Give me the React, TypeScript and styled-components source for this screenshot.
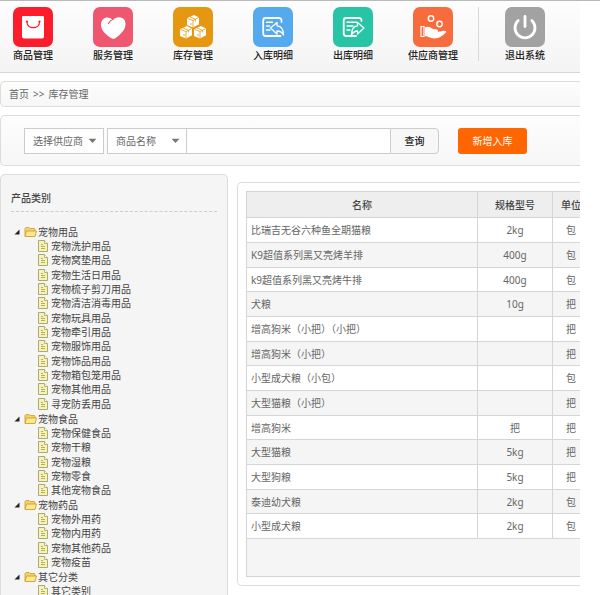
import React from "react";
import styled, { createGlobalStyle } from "styled-components";

const GlobalStyle = createGlobalStyle`
  * { box-sizing: border-box; }
  body {
    margin: 0;
    background: #fff;
    color: #666;
    font-family: "Noto Sans", "Noto Sans CJK SC", sans-serif;
    font-size: 10px;
    line-height: 14px;
  }
  button, input, select { font: inherit; color: inherit; margin: 0; }
  ul { list-style: none; margin: 0; padding: 0; }
`;

const Page = styled.div`
  height: 100vh;
  overflow: hidden;
  border-top: 1px solid #b9b9b9;
`;

const Shell = styled.div`
  display: flex;
  flex-direction: column;
  gap: 8px;
  margin-right: 20px;
`;

const Header = styled.header`
  display: flex;
  gap: 20px;
  height: 72px;
  padding: 6px 3px 0;
  border-bottom: 1px solid #d6d6d6;
  background: linear-gradient(#fdfdfd, #f4f4f4);
`;

const NavLink = styled.a`
  display: flex;
  flex-direction: column;
  align-items: center;
  gap: 1px;
  flex: 0 0 60px;
  height: 56px;
  color: #222;
  font-weight: 500;
  text-decoration: none;
  white-space: nowrap;
`;

const Tile = styled.span<{ $color: string }>`
  display: block;
  width: 40px;
  height: 40px;
  border-radius: 7px;
  background: ${(p) => p.$color};
  svg { display: block; }
`;

const Divider = styled.span`
  width: 1px;
  height: 54px;
  margin: 0 -4px 0 -5px;
  background: #d8d8d8;
`;

const Bar = styled.div`
  display: flex;
  align-items: center;
  border: 1px solid #dcdcdc;
  border-right: 0;
  border-radius: 5px 0 0 5px;
  background: linear-gradient(#fdfdfd, #f7f7f7);
`;

const Breadcrumb = styled(Bar).attrs({ as: "nav" })`
  gap: 4px;
  height: 26px;
  padding: 0 8px;
  a { color: inherit; text-decoration: none; }
`;

const SearchBar = styled(Bar).attrs({ as: "form" })`
  height: 51px;
  padding: 0 23px;
`;

const SelectBox = styled.span<{ $gap?: boolean }>`
  position: relative;
  flex: 0 0 80px;
  margin-right: ${(p) => (p.$gap ? "3px" : "0")};
  svg {
    position: absolute;
    right: 7px;
    top: 10px;
    pointer-events: none;
  }
`;

const Select = styled.select`
  display: block;
  appearance: none;
  width: 100%;
  height: 26px;
  padding: 0 18px 0 8px;
  border: 1px solid #ccc;
  border-radius: 0;
  background: #fff;
`;

const Keyword = styled.input`
  flex: 0 1 203px;
  min-width: 0;
  height: 26px;
  padding: 0 8px;
  border: 1px solid #ccc;
  border-width: 1px 0;
  background: #fff;
`;

const QueryButton = styled.button`
  flex: 0 0 49px;
  height: 26px;
  padding: 0;
  border: 1px solid #ccc;
  border-radius: 0 4px 4px 0;
  background: #f7f7f7;
  color: #222;
  font-weight: 500;
`;

const AddButton = styled.button`
  flex: 0 0 69px;
  height: 26px;
  margin-left: 19px;
  padding: 0;
  border: 0;
  border-radius: 3px;
  background: #ff6600;
  color: #fff;
`;

const Columns = styled.div`
  display: flex;
  align-items: flex-start;
  gap: 9px;
`;

const Sidebar = styled.aside`
  flex: 0 0 228px;
  padding: 16px 10px 20px;
  border: 1px solid #dcdcdc;
  border-radius: 5px;
  background: #f5f5f5;
`;

const SidebarTitle = styled.h2`
  margin: 0 0 12px;
  padding-bottom: 6px;
  border-bottom: 1px dashed #ccc;
  color: #444;
  font-size: 10px;
  font-weight: 500;
  line-height: 14px;
`;

const TreeRow = styled.div`
  display: flex;
  align-items: center;
  gap: 1px;
  height: 15px;
  padding-left: 3px;
  color: #444;
  line-height: 14px;
  white-space: nowrap;
  button { display: flex; padding: 0; border: 0; background: none; margin-right: 3px; }
  svg { flex: none; }
`;

const Leaf = styled.li`
  display: flex;
  align-items: center;
  gap: 3px;
  height: 14px;
  padding-left: 27px;
  color: #444;
  white-space: nowrap;
  &:nth-child(3n) { height: 15px; }
  svg { flex: none; }
`;

const Panel = styled.main`
  flex: 1;
  min-width: 0;
  overflow: hidden;
  margin-top: 8px;
  padding: 8px 0 8px 8px;
  border: 1px solid #dcdcdc;
  border-right: 0;
  border-radius: 5px 0 0 5px;
`;

const Table = styled.table`
  width: calc(100% + 10px);
  table-layout: fixed;
  border-collapse: collapse;
  line-height: 14px;
`;

const HeadCell = styled.th<{ $width?: number }>`
  width: ${(p) => (p.$width ? `${p.$width}px` : "auto")};
  height: 26px;
  padding: 0;
  border: 1px solid #d5d5d5;
  background: #eee;
  color: #444;
  font-weight: 500;
`;

const Row = styled.tr`
  height: 25px;
  background: #fff;
  &:nth-child(even) { background: #f5f5f5; }
  &:nth-child(3n) { height: 24px; }
`;

const Cell = styled.td<{ $left?: boolean }>`
  padding: 0 4px;
  border: 1px solid #d5d5d5;
  text-align: ${(p) => (p.$left ? "left" : "center")};
  white-space: nowrap;
`;

const FootCell = styled.td`
  height: 38px;
  border: 1px solid #d5d5d5;
  background: #f5f5f5;
`;

const BagIcon = () => (
  <svg width="40" height="40" viewBox="0 0 40 40" fill="none">
    <path d="M10 9h20a1 1 0 0 1 1 1v19.500a2 2 0 0 1-2 2H11a2 2 0 0 1-2-2V10a1 1 0 0 1 1-1z" fill="#fff" />
    <path d="M14 15c0 7.500 12.500 7.500 12.500 0" stroke="#fb1c2c" strokeWidth="1.300" />
    <circle cx="14" cy="14.500" r="1.100" fill="#fb1c2c" />
    <circle cx="26.500" cy="14.500" r="1.100" fill="#fb1c2c" />
  </svg>
);

const HeartIcon = () => (
  <svg width="40" height="40" viewBox="0 0 40 40" fill="none">
    <path d="M20 13c3-4 12.500-4 12.500 4 0 6-5 10.500-10.500 14.500-1 .6-2 .6-3 0C13 28 8 23.500 8 17.500 8 10.500 15.500 8 20 13z" fill="#fff" />
    <path d="M15.500 16.500c1-2 2.500-3.500 4.700-4.300" stroke="#ef566f" strokeWidth="1.200" strokeLinecap="round" />
  </svg>
);

const Box = ({ x, y }: { x: number; y: number }) => (
  <g transform={`translate(${x} ${y})`}>
    <path d="M0 3.200 7 0l5 2.400v6.800L6 12.500 0 10z" fill="#fff" />
    <path d="M.5 3.400 6 5.600l5.600-3M6 5.600v6.600M3 2l5.500 2.300v2.200M4 8v2" stroke="#e69710" strokeWidth=".8" />
  </g>
);

const BoxesIcon = () => (
  <svg width="40" height="40" viewBox="0 0 40 40" fill="none">
    <Box x={14} y={8} />
    <Box x={7} y={19} />
    <Box x={21} y={19} />
  </svg>
);

const InboundIcon = () => (
  <svg width="40" height="40" viewBox="0 0 40 40" fill="none" stroke="#fff" strokeLinejoin="round" strokeLinecap="round">
    <path d="M28.500 15v-1.500a2.500 2.500 0 0 0-2.500-2.500H12.700a2.500 2.500 0 0 0-2.500 2.500v13a2.500 2.500 0 0 0 2.500 2.500H27.500" strokeWidth="1.800" />
    <path d="M13.500 15.300h6M13.500 19h3M13.500 23h3.500" strokeWidth="1.400" />
    <path d="m17.500 21 6.500-5.500v3.300c4.500.3 6.500 3.700 6.500 9.200-1.500-3-3.500-4-6.500-4v3z" strokeWidth="1.300" />
  </svg>
);

const OutboundIcon = () => (
  <svg width="40" height="40" viewBox="0 0 40 40" fill="none" stroke="#fff" strokeLinejoin="round" strokeLinecap="round">
    <path d="M28.500 14v-.5a2.500 2.500 0 0 0-2.500-2.500H13.200a2.500 2.500 0 0 0-2.500 2.500v13a2.500 2.500 0 0 0 2.500 2.500H23" strokeWidth="1.800" />
    <path d="M14 15.300h9.500M14 19h6M14 23h3" strokeWidth="1.400" />
    <path d="m31 21-6.500-5.500v3.300c-4.300.3-6 3.700-6 9.200 1.500-3 3-4 6-4v3z" strokeWidth="1.300" />
  </svg>
);

const HandIcon = () => (
  <svg width="40" height="40" viewBox="0 0 40 40" fill="none">
    <circle cx="18" cy="11.500" r="2.700" stroke="#fff" strokeWidth="1.400" />
    <circle cx="26.500" cy="17" r="2.700" stroke="#fff" strokeWidth="1.400" />
    <path d="M8 19.500h3v10H8z" stroke="#fff" strokeWidth="1.200" />
    <path d="M12 20.500c3-1.500 5-.5 7.500 1.200 2 .8 5 .2 5.500 1.800 0 .6-.5 1-1.500 1.100 3 .3 4.500-.1 7-.8 2-.4 3.500.7 2.500 1.700-3 3-7.500 6-11.500 6-3.500 0-6-2-9.500-2.500z" fill="#fff" />
  </svg>
);

const PowerIcon = () => (
  <svg width="40" height="40" viewBox="0 0 40 40" fill="none" stroke="#fff" strokeWidth="2.800" strokeLinecap="round">
    <path d="M20 9.500v10M13.200 13.500a10 10 0 1 0 13.600 0" />
  </svg>
);

const Caret = () => (
  <svg width="9" height="6" viewBox="0 0 9 6">
    <path d="M.5.800h8L4.500 5z" fill="#777" />
  </svg>
);

const Expander = () => (
  <svg width="6" height="6" viewBox="0 0 6 6">
    <path d="M5.500.5v5h-5z" fill="#222" />
  </svg>
);

const Folder = () => (
  <svg width="13" height="12" viewBox="0 0 13 12">
    <path d="M1 10V2.500l1-1h3l1 1h4.500l.5 1V10z" fill="#f3d365" stroke="#c79a2c" strokeWidth=".8" />
    <path d="M2.500 5H12.500L11 10.500H1z" fill="#ffe88c" stroke="#c79a2c" strokeWidth=".8" />
  </svg>
);

const Doc = () => (
  <svg width="10" height="12" viewBox="0 0 10 12">
    <path d="M.5.500h6L9.500 3.500v8h-9z" fill="#f7f3b4" stroke="#a3a26c" strokeWidth=".9" />
    <path d="M6.500.5v3h3" fill="#fff" stroke="#a3a26c" strokeWidth=".8" />
    <path d="M3 4.500h2M3 6.500h4M3 8.500h4" stroke="#9d9a5c" strokeWidth=".8" />
  </svg>
);

const navItems = [
  { label: "商品管理", color: "#fb1c2c", Icon: BagIcon },
  { label: "服务管理", color: "#ef566f", Icon: HeartIcon },
  { label: "库存管理", color: "#e69710", Icon: BoxesIcon },
  { label: "入库明细", color: "#55a9ee", Icon: InboundIcon },
  { label: "出库明细", color: "#27c5a5", Icon: OutboundIcon },
  { label: "供应商管理", color: "#f76b3c", Icon: HandIcon },
];

const categories = [
  {
    name: "宠物用品",
    items: [
      "宠物洗护用品", "宠物窝垫用品", "宠物生活日用品", "宠物梳子剪刀用品",
      "宠物清洁消毒用品", "宠物玩具用品", "宠物牵引用品", "宠物服饰用品",
      "宠物饰品用品", "宠物箱包笼用品", "宠物其他用品", "寻宠防丢用品",
    ],
  },
  { name: "宠物食品", items: ["宠物保健食品", "宠物干粮", "宠物湿粮", "宠物零食", "其他宠物食品"] },
  { name: "宠物药品", items: ["宠物外用药", "宠物内用药", "宠物其他药品", "宠物疫苗"] },
  { name: "其它分类", items: ["其它类别"] },
];

const products = [
  ["比瑞吉无谷六种鱼全期猫粮", "2kg", "包"],
  ["K9超值系列黑又亮烤羊排", "400g", "包"],
  ["k9超值系列黑又亮烤牛排", "400g", "包"],
  ["犬粮", "10g", "把"],
  ["增高狗米（小把）（小把）", "", "把"],
  ["增高狗米（小把）", "", "把"],
  ["小型成犬粮（小包）", "", "包"],
  ["大型猫粮（小把）", "", "把"],
  ["增高狗米", "把", "把"],
  ["大型猫粮", "5kg", "把"],
  ["大型狗粮", "5kg", "把"],
  ["泰迪幼犬粮", "2kg", "包"],
  ["小型成犬粮", "2kg", "包"],
];

export default function App() {
  return (
    <Page lang="zh-CN">
      <GlobalStyle />
      <Shell>
        <Header>
          {navItems.map(({ label, color, Icon }) => (
            <NavLink href="#" key={label}>
              <Tile $color={color}><Icon /></Tile>
              {label}
            </NavLink>
          ))}
          <Divider />
          <NavLink href="#">
            <Tile $color="#a2a2a2"><PowerIcon /></Tile>
            退出系统
          </NavLink>
        </Header>

        <Breadcrumb>
          <a href="#">首页</a>
          <span>&gt;&gt;</span>
          <a href="#">库存管理</a>
        </Breadcrumb>

        <SearchBar>
          <SelectBox $gap>
            <Select aria-label="供应商"><option>选择供应商</option></Select>
            <Caret />
          </SelectBox>
          <SelectBox>
            <Select aria-label="查询字段"><option>商品名称</option></Select>
            <Caret />
          </SelectBox>
          <Keyword type="text" aria-label="关键字" />
          <QueryButton type="button">查询</QueryButton>
          <AddButton type="button">新增入库</AddButton>
        </SearchBar>

        <Columns>
          <Sidebar>
            <SidebarTitle>产品类别</SidebarTitle>
            <ul>
              {categories.map((category) => (
                <li key={category.name}>
                  <TreeRow>
                    <button type="button" aria-label={`收起${category.name}`}><Expander /></button>
                    <Folder />
                    <span>{category.name}</span>
                  </TreeRow>
                  <ul>
                    {category.items.map((item) => (
                      <Leaf key={item}><Doc />{item}</Leaf>
                    ))}
                  </ul>
                </li>
              ))}
            </ul>
          </Sidebar>

          <Panel>
            <Table>
              <thead>
                <tr>
                  <HeadCell>名称</HeadCell>
                  <HeadCell $width={75}>规格型号</HeadCell>
                  <HeadCell $width={37}>单位</HeadCell>
                </tr>
              </thead>
              <tbody>
                {products.map(([name, spec, unit]) => (
                  <Row key={name + spec}>
                    <Cell $left>{name}</Cell>
                    <Cell>{spec}</Cell>
                    <Cell>{unit}</Cell>
                  </Row>
                ))}
              </tbody>
              <tfoot>
                <tr><FootCell colSpan={3} /></tr>
              </tfoot>
            </Table>
          </Panel>
        </Columns>
      </Shell>
    </Page>
  );
}
